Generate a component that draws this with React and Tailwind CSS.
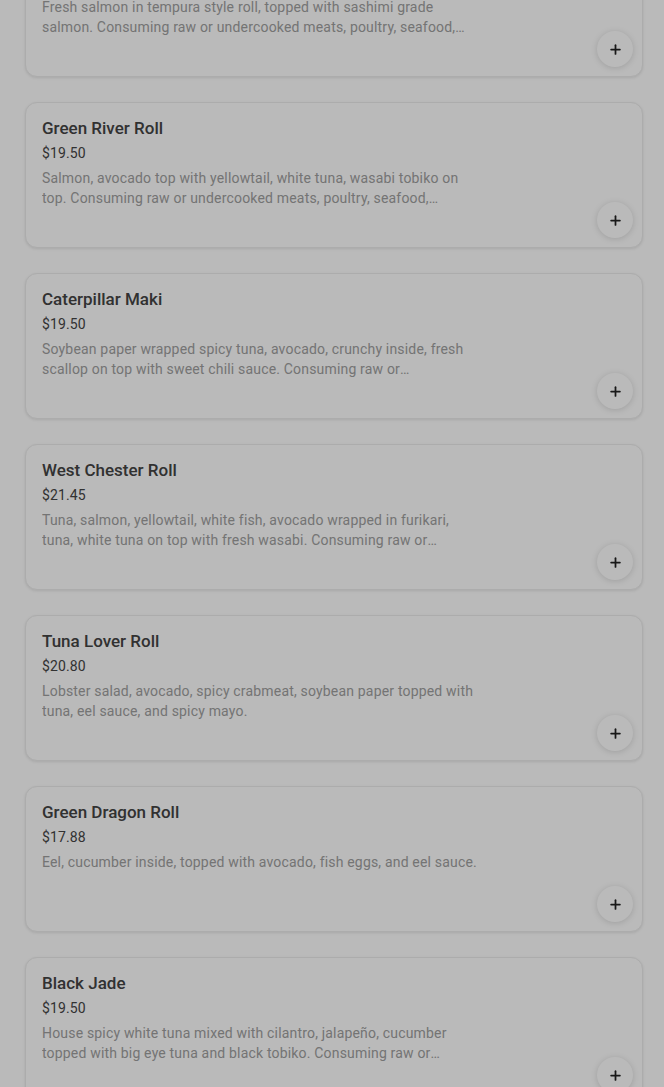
import { Plus } from 'lucide-react'

const items = [
  {
    name: 'Salmon Tempura Roll',
    price: '$19.50',
    desc: 'Fresh salmon in tempura style roll, topped with sashimi grade salmon. Consuming raw or undercooked meats, poultry, seafood, shellfish, or eggs may increase your risk of foodborne illness.',
  },
  {
    name: 'Green River Roll',
    price: '$19.50',
    desc: 'Salmon, avocado top with yellowtail, white tuna, wasabi tobiko on top. Consuming raw or undercooked meats, poultry, seafood, shellfish, or eggs may increase your risk of foodborne illness.',
  },
  {
    name: 'Caterpillar Maki',
    price: '$19.50',
    desc: 'Soybean paper wrapped spicy tuna, avocado, crunchy inside, fresh scallop on top with sweet chili sauce. Consuming raw or undercooked meats, poultry, seafood, shellfish, or eggs may increase your risk of foodborne illness.',
  },
  {
    name: 'West Chester Roll',
    price: '$21.45',
    desc: 'Tuna, salmon, yellowtail, white fish, avocado wrapped in furikari, tuna, white tuna on top with fresh wasabi. Consuming raw or undercooked meats, poultry, seafood, shellfish, or eggs may increase your risk of foodborne illness.',
  },
  {
    name: 'Tuna Lover Roll',
    price: '$20.80',
    desc: 'Lobster salad, avocado, spicy crabmeat, soybean paper topped with tuna, eel sauce, and spicy mayo.',
  },
  {
    name: 'Green Dragon Roll',
    price: '$17.88',
    desc: 'Eel, cucumber inside, topped with avocado, fish eggs, and eel sauce.',
  },
  {
    name: 'Black Jade',
    price: '$19.50',
    desc: 'House spicy white tuna mixed with cilantro, jalapeño, cucumber topped with big eye tuna and black tobiko. Consuming raw or undercooked meats, poultry, seafood, shellfish, or eggs may increase your risk of foodborne illness.',
  },
]

function MenuCard({ item }) {
  return (
    <div className="relative h-[146px] rounded-xl border border-[#ececec] bg-white px-4 pt-[14px] shadow-[0_1px_3px_rgba(0,0,0,0.1)]">
      <div className="text-[17px] leading-[22px] font-medium text-[#444]">{item.name}</div>
      <div className="mt-[4px] text-[14px] leading-5 tracking-[0.1px] text-[#454545]">{item.price}</div>
      <p className="mt-[5px] w-[438px] text-[14px] leading-5 tracking-[0.18px] text-[#a0a0a0] line-clamp-2">{item.desc}</p>
      <button className="absolute bottom-[9px] right-[9px] flex h-9 w-9 items-center justify-center rounded-full bg-white shadow-[0_1px_6px_rgba(0,0,0,0.15)]">
        <Plus size={15} strokeWidth={2.8} className="text-[#222]" />
      </button>
    </div>
  )
}

export default function App() {
  return (
    <div className="relative min-h-screen overflow-hidden bg-white" style={{ fontFamily: 'Roboto, "Noto Sans", Arial, sans-serif' }}>
      <div className="mt-[-69px] flex flex-col gap-[25px] pl-[25px] pr-[21px]">
        {items.map((item) => (
          <MenuCard key={item.name} item={item} />
        ))}
      </div>
      <div className="fixed inset-0 bg-black/[0.27]" />
    </div>
  )
}
